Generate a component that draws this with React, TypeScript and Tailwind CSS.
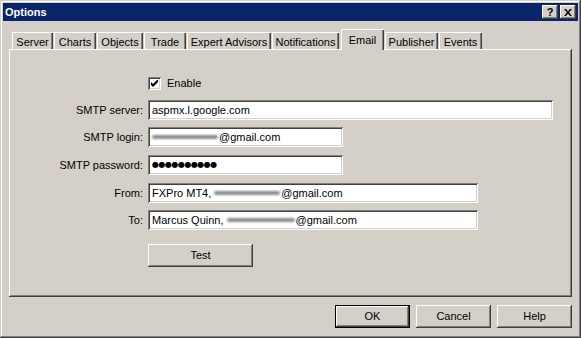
import React from 'react';

const raised =
  'shadow-[inset_-1px_-1px_#404040,inset_1px_1px_#ffffff,inset_-2px_-2px_#808080]';
const sunken =
  'shadow-[inset_1px_1px_#808080,inset_-1px_-1px_#ffffff,inset_2px_2px_#404040,inset_-2px_-2px_#d4d0c8]';

const tabs = [
  { label: 'Server', cls: 'w-[41px] mr-px' },
  { label: 'Charts', cls: 'w-[42px] mr-px' },
  { label: 'Objects', cls: 'w-[46px] mr-px' },
  { label: 'Trade', cls: 'w-[42px] mr-px' },
  { label: 'Expert Advisors', cls: 'w-[84px] mr-px' },
  { label: 'Notifications', cls: 'w-[67px] mr-[2px]' },
  { label: 'Email', cls: 'w-[43px] mr-px', active: true },
  { label: 'Publisher', cls: 'w-[53px] mr-px' },
  { label: 'Events', cls: 'w-[43px]' },
];

// grey smear standing in for the hidden part of an address
const Smudge = ({ w }: { w: string }) => (
  <span className={`inline-block h-[4px] ${w} ml-[3px] mr-px rounded-full bg-[#8c8c8c] blur-[1px] align-middle`} />
);

const Field = ({ label, w, mt, children }: { label: string; w: string; mt: string; children: React.ReactNode }) => (
  <div className={`flex items-center ${mt}`}>
    <div className="w-[134px] text-right">{label}</div>
    <div className={`ml-[5px] h-[20px] ${w} bg-white ${sunken} pl-[4px] flex items-center whitespace-nowrap overflow-hidden`}>
      {children}
    </div>
  </div>
);

const Button = ({ children, w, def }: { children: React.ReactNode; w: string; def?: boolean }) => (
  <div
    className={`${w} h-[23px] flex items-center justify-center bg-[#d4d0c8] ${
      def
        ? 'shadow-[inset_0_0_0_1px_#000000,inset_-2px_-2px_#404040,inset_2px_2px_#ffffff,inset_-3px_-3px_#808080]'
        : raised
    }`}
  >
    {children}
  </div>
);

export default function App() {
  return (
    <div
      className={`w-[581px] h-[338px] bg-[#d4d0c8] p-[3px] text-[11px] text-black shadow-[inset_-1px_-1px_#404040,inset_1px_1px_#d4d0c8,inset_-2px_-2px_#808080,inset_2px_2px_#ffffff] overflow-hidden`}
      style={{ fontFamily: '"Liberation Sans", Arial, sans-serif' }}
    >
      {/* Title bar */}
      <div className="h-[18px] bg-[#0a246a] flex items-center justify-between pl-[2px] pr-[2px]">
        <span className="text-white font-bold text-[11px]">Options</span>
        <div className="flex items-center gap-[2px]">
          <div className={`w-[16px] h-[14px] bg-[#d4d0c8] ${raised} flex items-center justify-center font-bold text-[11px] leading-none`}>
            ?
          </div>
          <div className={`w-[16px] h-[14px] bg-[#d4d0c8] ${raised} flex items-center justify-center`}>
            <svg width="8" height="7" viewBox="0 0 8 7">
              <path d="M0 0h2l2 2.5L6 0h2L5 3.5 8 7H6L4 4.5 2 7H0l3-3.5z" fill="#000" />
            </svg>
          </div>
        </div>
      </div>

      {/* Tab strip */}
      <div className="mt-[8px] ml-[6px] h-[20px] flex items-end pl-[3px]">
        {tabs.map((t) =>
          t.active ? (
            <div
              key={t.label}
              className={`${t.cls} relative z-10 -mb-px h-[21px] bg-[#d4d0c8] shadow-[inset_1px_1px_#ffffff,inset_-1px_0_#404040,inset_-2px_0_#808080] flex justify-center pt-[3px]`}
            >
              {t.label}
            </div>
          ) : (
            <div
              key={t.label}
              className={`${t.cls} h-[17px] bg-[#d4d0c8] shadow-[inset_1px_1px_#ffffff,inset_-1px_0_#404040,inset_-2px_0_#808080] flex justify-center pt-[2px]`}
            >
              {t.label}
            </div>
          )
        )}
      </div>

      {/* Panel */}
      <div className={`ml-[6px] w-[563px] h-[248px] ${raised} pt-[27px]`}>
        <div className="ml-[139px] h-[14px] flex items-center">
          <div className={`w-[13px] h-[13px] bg-white ${sunken} flex items-center justify-center`}>
            <svg width="7" height="7" viewBox="0 0 7 7">
              <path d="M0 2v3l2 2 5-5V-1L2 4z" fill="#000" />
            </svg>
          </div>
          <span className="ml-[6px]">Enable</span>
        </div>

        <Field label="SMTP server:" w="w-[405px]" mt="mt-[10px]">
          aspmx.l.google.com
        </Field>
        <Field label="SMTP login:" w="w-[195px]" mt="mt-[7px]">
          <span className="inline-block h-[4px] w-[66px] mr-px rounded-full bg-[#8c8c8c] blur-[1px] align-middle" />@gmail.com
        </Field>
        <Field label="SMTP password:" w="w-[195px]" mt="mt-[8px]">
          <span className="text-[8px] tracking-[-0.5px]" style={{ fontFamily: '"DejaVu Sans", sans-serif' }}>
            ●●●●●●●●●●
          </span>
        </Field>
        <Field label="From:" w="w-[330px]" mt="mt-[8px]">
          FXPro MT4,<Smudge w="w-[66px]" />@gmail.com
        </Field>
        <Field label="To:" w="w-[330px]" mt="mt-[7px]">
          Marcus Quinn,<Smudge w="w-[68px]" />@gmail.com
        </Field>

        <div className="ml-[139px] mt-[14px]">
          <Button w="w-[105px]">Test</Button>
        </div>
      </div>

      {/* Dialog buttons */}
      <div className="mt-[8px] flex justify-end gap-[6px] pr-[6px]">
        <Button w="w-[75px]" def>
          OK
        </Button>
        <Button w="w-[75px]">Cancel</Button>
        <Button w="w-[75px]">Help</Button>
      </div>
    </div>
  );
}
